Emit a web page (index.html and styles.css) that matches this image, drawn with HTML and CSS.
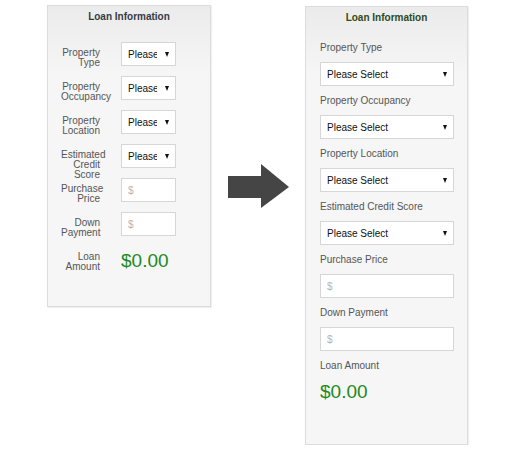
FILE: index.html
```html
<!DOCTYPE html>
<html lang="en">
<head>
<meta charset="utf-8">
<title>Loan Information</title>
<link rel="stylesheet" href="styles.css">
</head>
<body>
<main class="stage">
  <section class="panel panel-narrow">
    <h2 class="panel-title title-slate">Loan Information</h2>
    <div class="row">
      <label class="row-label">Property Type</label>
      <span class="select-wrap"><select class="field"><option>Please Select</option></select></span>
    </div>
    <div class="row">
      <label class="row-label">Property Occupancy</label>
      <span class="select-wrap"><select class="field"><option>Please Select</option></select></span>
    </div>
    <div class="row">
      <label class="row-label">Property Location</label>
      <span class="select-wrap"><select class="field"><option>Please Select</option></select></span>
    </div>
    <div class="row">
      <label class="row-label">Estimated Credit Score</label>
      <span class="select-wrap"><select class="field"><option>Please Select</option></select></span>
    </div>
    <div class="row">
      <label class="row-label">Purchase Price</label>
      <input class="field" type="text" placeholder="$">
    </div>
    <div class="row">
      <label class="row-label">Down Payment</label>
      <input class="field" type="text" placeholder="$">
    </div>
    <div class="row row-total">
      <label class="row-label">Loan Amount</label>
      <span class="amount">$0.00</span>
    </div>
  </section>

  <svg class="arrow" width="94" height="44" viewBox="0 0 94 44" aria-hidden="true">
    <rect x="17" y="12" width="34" height="22" fill="#454545"/>
    <polygon points="50,0 78,23 50,44" fill="#454545"/>
  </svg>

  <section class="panel panel-wide">
    <h2 class="panel-title title-green">Loan Information</h2>
    <div class="stack">
      <label class="stack-label">Property Type</label>
      <span class="select-wrap"><select class="field"><option>Please Select</option></select></span>
    </div>
    <div class="stack">
      <label class="stack-label">Property Occupancy</label>
      <span class="select-wrap"><select class="field"><option>Please Select</option></select></span>
    </div>
    <div class="stack">
      <label class="stack-label">Property Location</label>
      <span class="select-wrap"><select class="field"><option>Please Select</option></select></span>
    </div>
    <div class="stack">
      <label class="stack-label">Estimated Credit Score</label>
      <span class="select-wrap"><select class="field"><option>Please Select</option></select></span>
    </div>
    <div class="stack">
      <label class="stack-label">Purchase Price</label>
      <input class="field" type="text" placeholder="$">
    </div>
    <div class="stack">
      <label class="stack-label">Down Payment</label>
      <input class="field" type="text" placeholder="$">
    </div>
    <div class="stack stack-total">
      <label class="stack-label">Loan Amount</label>
      <span class="amount amount-wide">$0.00</span>
    </div>
  </section>
</main>
</body>
</html>
```

FILE: styles.css
```css
* { box-sizing: border-box; }

html, body {
  margin: 0;
  padding: 0;
  background: #ffffff;
}

body {
  font-family: "Liberation Sans", Arial, sans-serif;
  font-size: 10px;
  color: #555;
}

.stage {
  display: flex;
  align-items: flex-start;
  padding: 5px 0 0 47px;
}

.panel {
  border: 1px solid #dcdcdc;
  background: linear-gradient(#ebebeb, #f6f6f6 70px, #f6f6f6);
  box-shadow: 1px 1px 1px rgba(0, 0, 0, 0.06);
}

.panel-narrow {
  width: 164px;
  height: 302px;
  padding: 5px 34px 0 13px;
}

.panel-wide {
  width: 163px;
  height: 439px;
  margin-top: 1px;
  padding: 5px 13px 0 14px;
}

.panel-title {
  margin: 0;
  font-size: 10px;
  line-height: 12px;
  font-weight: bold;
  text-align: center;
}

.panel-narrow .panel-title { margin: 0 -34px 19px -13px; }
.panel-wide .panel-title { margin: 0 -13px 18px -14px; }

.title-slate { color: #333b45; }
.title-green { color: #2d4a20; }

/* narrow layout: label beside control */
.row {
  display: grid;
  grid-template-columns: 39px 55px;
  column-gap: 21px;
  height: 24px;
  margin-bottom: 10px;
}

.row-total { margin-top: 4px; }

.row-label {
  display: block;
  padding-top: 6px;
  line-height: 10px;
  text-align: right;
  color: #555;
}

/* wide layout: label above control */
.stack {
  display: flex;
  flex-direction: column;
  margin-bottom: 9px;
}

.stack-total { margin-top: 1px; }

.stack-label {
  display: block;
  line-height: 12px;
  margin-bottom: 8px;
  color: #555;
}

.select-wrap {
  position: relative;
  display: block;
}

.select-wrap::after {
  content: "";
  position: absolute;
  right: 7px;
  top: 10px;
  border-left: 2.5px solid transparent;
  border-right: 2.5px solid transparent;
  border-top: 5px solid #111;
  pointer-events: none;
}

.field {
  display: block;
  width: 100%;
  height: 24px;
  margin: 0;
  border: 1px solid #d6d6d6;
  border-radius: 0;
  background: #fff;
  font-family: "Liberation Sans", Arial, sans-serif;
  font-size: 10px;
  color: #111;
  padding: 0 6px;
  outline: none;
}

select.field {
  -webkit-appearance: none;
  appearance: none;
  padding-right: 18px;
}

.field::placeholder { color: #b5b5b5; }

.amount {
  display: block;
  padding-top: 3px;
  font-size: 19px;
  line-height: 24px;
  color: #1d8a1d;
}

.amount-wide { padding-top: 0; margin-top: 0; }

.arrow {
  display: block;
  margin-top: 159px;
  flex: none;
}
```
